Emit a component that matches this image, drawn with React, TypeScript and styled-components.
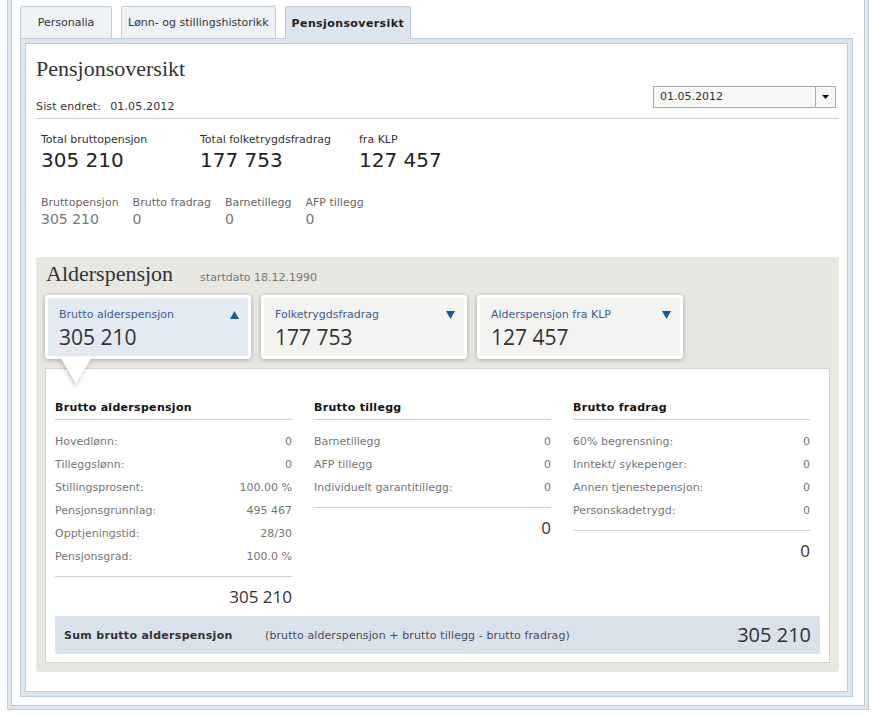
import React from "react";
import styled, { createGlobalStyle } from "styled-components";

const GlobalStyle = createGlobalStyle`
  html, body { margin: 0; padding: 0; background: #fff; }
  body {
    font-family: "DejaVu Sans", Verdana, sans-serif;
    font-size: 11px;
    color: #333;
  }
  * { box-sizing: border-box; }
`;

const Frame = styled.div`
  width: 862px;
  margin: 0 0 5px 7px;
  border: 1px solid #c3cbd6;
  border-top: none;
  background: #dde5ee;
  padding: 0 3px 3px;
`;

const FrameInner = styled.div`
  border: 1px solid #c3cbd6;
  border-top: none;
  background: #fff;
  padding: 6px 11px 8px 8px;
`;

const TabBar = styled.div`
  display: flex;
  align-items: flex-end;
  gap: 9px;
  position: relative;
  z-index: 1;
`;

const Tab = styled.div<{ $active?: boolean }>`
  height: ${(p) => (p.$active ? 33 : 32)}px;
  margin-bottom: ${(p) => (p.$active ? -1 : 0)}px;
  min-width: 92px;
  padding: 0 6px;
  display: flex;
  align-items: center;
  justify-content: center;
  border: 1px solid #c3cbd6;
  border-bottom: none;
  border-radius: 2px 2px 0 0;
  background: ${(p) => (p.$active ? "#dde5ee" : "#eef2f7")};
  font-weight: ${(p) => (p.$active ? 700 : 400)};
  letter-spacing: ${(p) => (p.$active ? "0.4px" : "0")};
  color: ${(p) => (p.$active ? "#222" : "#333")};
`;

const Panel = styled.div`
  border: 1px solid #c3cbd6;
  background: #dde5ee;
  padding: 4px;
`;

const PanelInner = styled.div`
  border: 1px solid #c3cbd6;
  background: #fff;
  padding: 0 8px 19px 10px;
`;

const Header = styled.div`
  display: flex;
  justify-content: space-between;
  align-items: flex-end;
  border-bottom: 1px solid #cfcfcf;
  padding-bottom: 4px;
`;

const Title = styled.h1`
  margin: 12px 0 0;
  font: 400 22px/26px "Liberation Serif", "Times New Roman", serif;
  color: #333;
`;

const Changed = styled.div`
  margin-top: 18px;
  line-height: 14px;
  color: #333;
  letter-spacing: 0.15px;
`;

const ChangedDate = styled.span`
  margin-left: 9px;
`;

const Select = styled.div`
  width: 183px;
  height: 22px;
  margin: 0 3px 6px 0;
  display: flex;
  border: 1px solid #a9a9a9;
  background: #f6f6f4;
`;

const SelectText = styled.div`
  flex: 1;
  padding-left: 6px;
  line-height: 20px;
  color: #333;
`;

const SelectButton = styled.div`
  width: 20px;
  border-left: 1px solid #a9a9a9;
  display: flex;
  align-items: center;
  justify-content: center;
`;

const StatsRow = styled.div`
  display: flex;
  margin-top: 14px;
  padding-left: 5px;
`;

const Stat = styled.div`
  width: 159px;
`;

const StatLabel = styled.div`
  line-height: 14px;
  color: #333;
`;

const StatValue = styled.div`
  margin-top: 1px;
  font-size: 20px;
  line-height: 24px;
  color: #222;
`;

const SubRow = styled.div`
  display: flex;
  gap: 14px;
  margin-top: 24px;
  padding-left: 5px;
`;

const SubLabel = styled.div`
  line-height: 14px;
  color: #666;
`;

const SubValue = styled.div`
  margin-top: 1px;
  font-size: 14px;
  line-height: 17px;
  color: #777;
`;

const Section = styled.section`
  margin-top: 29px;
  background: #e8e7e2;
  border-radius: 3px;
  padding: 4px 9px 9px;
`;

const SectionHead = styled.div`
  display: flex;
  align-items: baseline;
  gap: 27px;
  padding-left: 1px;
`;

const SectionTitle = styled.h2`
  margin: 0;
  font: 400 22px/26px "Liberation Serif", "Times New Roman", serif;
  color: #333;
`;

const StartDate = styled.span`
  color: #777;
`;

const Cards = styled.div`
  display: flex;
  gap: 10px;
  margin-top: 8px;
`;

const Card = styled.div<{ $active?: boolean }>`
  position: relative;
  width: 206px;
  border: 3px solid #fff;
  border-radius: 3px;
  background: ${(p) => (p.$active ? "#e3eaf2" : "#f3f3f1")};
  box-shadow: 0 1px 5px rgba(0, 0, 0, 0.28);
  padding: 10px 9px 7px 11px;
`;

const CardTop = styled.div`
  display: flex;
  justify-content: space-between;
  align-items: center;
  line-height: 14px;
  color: #3b5e8c;
`;

const CardValue = styled.div`
  margin-top: 3px;
  font: 400 21px/24px "Open Sans", "Noto Sans", sans-serif;
  color: #333;
`;

const Pointer = styled.svg`
  position: absolute;
  left: 12px;
  top: 100%;
  margin-top: 1px;
  filter: drop-shadow(-1px 2px 2px rgba(0, 0, 0, 0.22));
`;

const Detail = styled.div`
  margin-top: 9px;
  background: #fff;
  border: 1px solid #d6d3ca;
  padding: 32px 9px 8px;
`;

const Columns = styled.div`
  display: grid;
  grid-template-columns: repeat(3, 237px);
  column-gap: 22px;
  align-items: start;
`;

const ColHead = styled.div`
  font-weight: 700;
  letter-spacing: 0.3px;
  color: #111;
  line-height: 14px;
  padding-bottom: 4px;
  border-bottom: 1px solid #cfcfcf;
`;

const Rows = styled.div`
  margin-top: 10px;
  padding-bottom: 8px;
  border-bottom: 1px solid #cfcfcf;
`;

const Row = styled.div`
  display: flex;
  justify-content: space-between;
  height: 23px;
  line-height: 23px;
  color: #757575;
`;

const ColTotal = styled.div`
  margin-top: 9px;
  text-align: right;
  font: 400 17px/22px "Open Sans", "Noto Sans", sans-serif;
  color: #333;
`;

const SumBar = styled.div`
  margin-top: 8px;
  height: 38px;
  background: #d9e2eb;
  border-radius: 2px;
  display: flex;
  align-items: center;
  padding: 0 9px;
`;

const SumLabel = styled.div`
  width: 201px;
  font-weight: 700;
  letter-spacing: 0.3px;
  color: #333;
`;

const SumFormula = styled.div`
  flex: 1;
  color: #4d4d55;
  letter-spacing: 0.1px;
`;

const SumValue = styled.div`
  font: 400 20px/24px "Open Sans", "Noto Sans", sans-serif;
  color: #333;
`;

const Arrow = ({ up }: { up?: boolean }) => (
  <svg width="9" height="8" viewBox="0 0 9 8">
    <polygon points={up ? "4.5,0 9,8 0,8" : "0,0 9,0 4.5,8"} fill="#1b5b8f" />
  </svg>
);

type Col = { title: string; rows: [string, string][]; total: string };

const columns: Col[] = [
  {
    title: "Brutto alderspensjon",
    rows: [
      ["Hovedlønn:", "0"],
      ["Tilleggslønn:", "0"],
      ["Stillingsprosent:", "100.00 %"],
      ["Pensjonsgrunnlag:", "495 467"],
      ["Opptjeningstid:", "28/30"],
      ["Pensjonsgrad:", "100.0 %"],
    ],
    total: "305 210",
  },
  {
    title: "Brutto tillegg",
    rows: [
      ["Barnetillegg", "0"],
      ["AFP tillegg", "0"],
      ["Individuelt garantitillegg:", "0"],
    ],
    total: "0",
  },
  {
    title: "Brutto fradrag",
    rows: [
      ["60% begrensning:", "0"],
      ["Inntekt/ sykepenger:", "0"],
      ["Annen tjenestepensjon:", "0"],
      ["Personskadetrygd:", "0"],
    ],
    total: "0",
  },
];

const cards = [
  { label: "Brutto alderspensjon", value: "305 210", active: true },
  { label: "Folketrygdsfradrag", value: "177 753", active: false },
  { label: "Alderspensjon fra KLP", value: "127 457", active: false },
];

export default function App() {
  return (
    <>
      <GlobalStyle />
      <Frame>
        <FrameInner>
          <TabBar>
            <Tab>Personalia</Tab>
            <Tab>Lønn- og stillingshistorikk</Tab>
            <Tab $active>Pensjonsoversikt</Tab>
          </TabBar>
          <Panel>
            <PanelInner>
              <Header>
                <div>
                  <Title>Pensjonsoversikt</Title>
                  <Changed>
                    Sist endret:<ChangedDate>01.05.2012</ChangedDate>
                  </Changed>
                </div>
                <Select>
                  <SelectText>01.05.2012</SelectText>
                  <SelectButton>
                    <svg width="7" height="4" viewBox="0 0 7 4">
                      <polygon points="0,0 7,0 3.5,4" fill="#111" />
                    </svg>
                  </SelectButton>
                </Select>
              </Header>

              <StatsRow>
                <Stat>
                  <StatLabel>Total bruttopensjon</StatLabel>
                  <StatValue>305 210</StatValue>
                </Stat>
                <Stat>
                  <StatLabel>Total folketrygdsfradrag</StatLabel>
                  <StatValue>177 753</StatValue>
                </Stat>
                <Stat>
                  <StatLabel>fra KLP</StatLabel>
                  <StatValue>127 457</StatValue>
                </Stat>
              </StatsRow>

              <SubRow>
                <div>
                  <SubLabel>Bruttopensjon</SubLabel>
                  <SubValue>305 210</SubValue>
                </div>
                <div>
                  <SubLabel>Brutto fradrag</SubLabel>
                  <SubValue>0</SubValue>
                </div>
                <div>
                  <SubLabel>Barnetillegg</SubLabel>
                  <SubValue>0</SubValue>
                </div>
                <div>
                  <SubLabel>AFP tillegg</SubLabel>
                  <SubValue>0</SubValue>
                </div>
              </SubRow>

              <Section>
                <SectionHead>
                  <SectionTitle>Alderspensjon</SectionTitle>
                  <StartDate>startdato 18.12.1990</StartDate>
                </SectionHead>
                <Cards>
                  {cards.map((c) => (
                    <Card key={c.label} $active={c.active}>
                      <CardTop>
                        <span>{c.label}</span>
                        <Arrow up={c.active} />
                      </CardTop>
                      <CardValue>{c.value}</CardValue>
                      {c.active && (
                        <Pointer width="32" height="27" viewBox="0 0 32 27">
                          <polygon points="0,0 32,0 16,27" fill="#fff" />
                        </Pointer>
                      )}
                    </Card>
                  ))}
                </Cards>
                <Detail>
                  <Columns>
                    {columns.map((col) => (
                      <div key={col.title}>
                        <ColHead>{col.title}</ColHead>
                        <Rows>
                          {col.rows.map(([k, v]) => (
                            <Row key={k}>
                              <span>{k}</span>
                              <span>{v}</span>
                            </Row>
                          ))}
                        </Rows>
                        <ColTotal>{col.total}</ColTotal>
                      </div>
                    ))}
                  </Columns>
                  <SumBar>
                    <SumLabel>Sum brutto alderspensjon</SumLabel>
                    <SumFormula>
                      (brutto alderspensjon + brutto tillegg - brutto fradrag)
                    </SumFormula>
                    <SumValue>305 210</SumValue>
                  </SumBar>
                </Detail>
              </Section>
            </PanelInner>
          </Panel>
        </FrameInner>
      </Frame>
    </>
  );
}
